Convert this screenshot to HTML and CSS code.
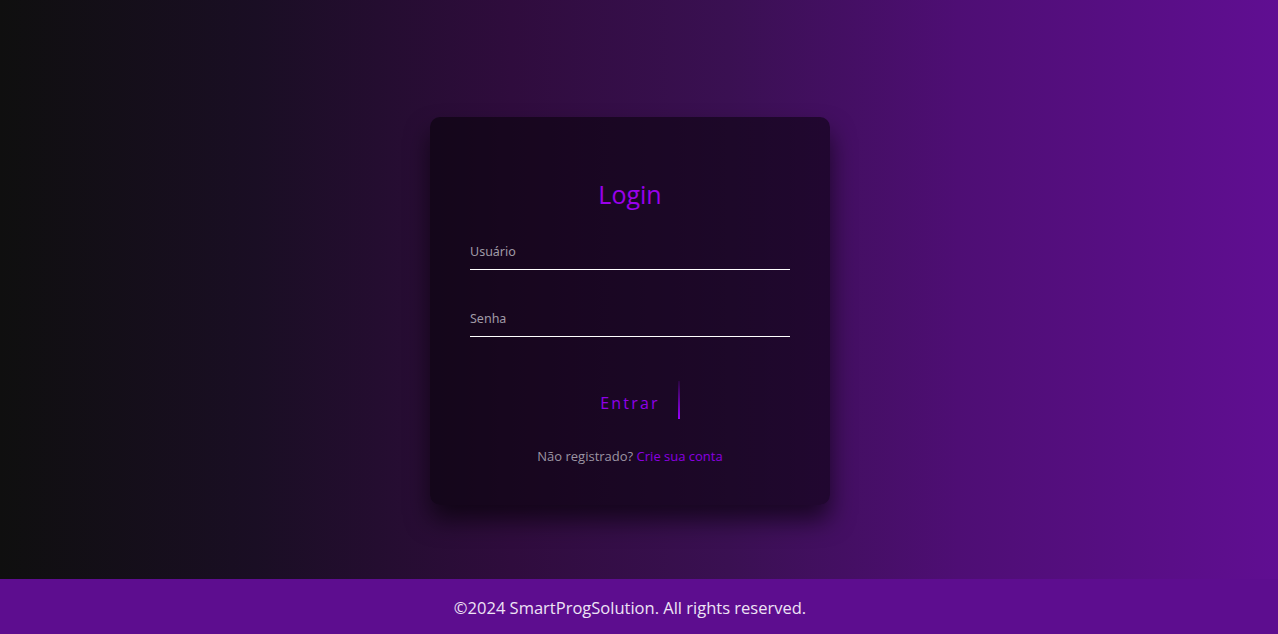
FILE: index.html
```html
<!DOCTYPE html>
<html lang="pt-BR">
<head>
<meta charset="utf-8">
<title>Login</title>
<link rel="stylesheet" href="styles.css">
</head>
<body>
<main class="page">
  <section class="login-box">
    <h2 class="title">Login</h2>
    <form class="form">
      <div class="user-box">
        <input type="text" required>
        <label>Usuário</label>
      </div>
      <div class="user-box">
        <input type="password" required>
        <label>Senha</label>
      </div>
      <div class="actions">
        <a href="#" class="btn">Entrar<span class="line"></span></a>
      </div>
      <p class="register">Não registrado? <a href="#">Crie sua conta</a></p>
    </form>
  </section>
</main>
<footer class="footer">©2024 SmartProgSolution. All rights reserved.</footer>
</body>
</html>
```
FILE: styles.css
```css
* { box-sizing: border-box; }
html, body { margin: 0; padding: 0; height: 100%; }
body {
  display: flex;
  flex-direction: column;
  font-family: "Open Sans", "Lato", sans-serif;
  background: linear-gradient(to right, #0f0f0f 0%, #1a0e24 20%, #2f0c3d 40%, #3a1052 57%, #4e0e74 75%, #600e92 100%);
}
.page {
  flex: 1;
  display: flex;
  justify-content: center;
  align-items: flex-start;
  padding-top: 117px;
  padding-right: 18px;
}
.login-box {
  width: 400px;
  height: 388px;
  padding: 40px;
  background: rgba(0, 0, 0, 0.5);
  border-radius: 10px;
  box-shadow: 0 15px 25px rgba(0, 0, 0, 0.6);
}
.title {
  margin: 22px 0 28px;
  text-align: center;
  font-weight: 400;
  font-size: 25px;
  line-height: 30px;
  color: #9a00ec;
  font-family: "Open Sans", sans-serif;
}
.user-box {
  position: relative;
  height: 67px;
}
.user-box input {
  width: 100%;
  height: 33px;
  padding: 10px 0;
  border: none;
  border-bottom: 1px solid #fff;
  outline: none;
  background: transparent;
  color: #fff;
  font-size: 16px;
}
.user-box label {
  position: absolute;
  top: 6px;
  left: 0;
  font-family: "Noto Sans", sans-serif;
  font-size: 12.5px;
  color: #a09aa6;
  pointer-events: none;
}
.actions {
  display: flex;
  justify-content: center;
  padding-top: 10px;
}
.btn {
  position: relative;
  display: inline-block;
  padding: 13px 20px 7px;
  color: #8f00e8;
  text-decoration: none;
  font-size: 16px;
  letter-spacing: 2.2px;
  line-height: 18px;
  font-family: "Open Sans", sans-serif;
}
.line {
  position: absolute;
  right: 0;
  top: 0;
  width: 2px;
  height: 38px;
  background: linear-gradient(180deg, rgba(120, 0, 200, 0.15), #9a00ff);
}
.register {
  margin: 28px 0 0;
  text-align: center;
  font-size: 13px;
  color: #9c95a3;
  font-family: "Open Sans", sans-serif;
}
.register a { color: #8a00e0; text-decoration: none; }
.footer {
  height: 55px;
  display: flex;
  align-items: center;
  justify-content: center;
  padding: 2px 18px 0 0;
  background: #5d0d8f;
  color: #eee3f5;
  font-size: 16.5px;
  font-family: "Open Sans", sans-serif;
}
```
